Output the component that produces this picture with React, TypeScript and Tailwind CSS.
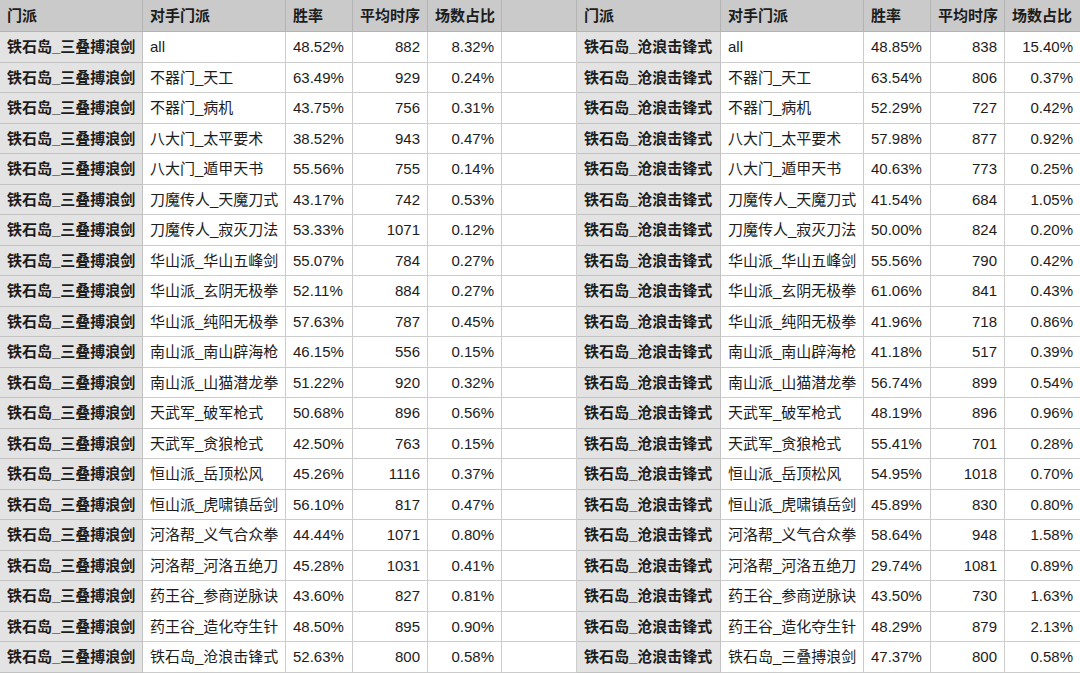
import React from "react";

type Row = [string, string, string, string];

const left: Row[] = [
  ["all", "48.52%", "882", "8.32%"],
  ["不器门_天工", "63.49%", "929", "0.24%"],
  ["不器门_病机", "43.75%", "756", "0.31%"],
  ["八大门_太平要术", "38.52%", "943", "0.47%"],
  ["八大门_遁甲天书", "55.56%", "755", "0.14%"],
  ["刀魔传人_天魔刀式", "43.17%", "742", "0.53%"],
  ["刀魔传人_寂灭刀法", "53.33%", "1071", "0.12%"],
  ["华山派_华山五峰剑", "55.07%", "784", "0.27%"],
  ["华山派_玄阴无极拳", "52.11%", "884", "0.27%"],
  ["华山派_纯阳无极拳", "57.63%", "787", "0.45%"],
  ["南山派_南山辟海枪", "46.15%", "556", "0.15%"],
  ["南山派_山猫潜龙拳", "51.22%", "920", "0.32%"],
  ["天武军_破军枪式", "50.68%", "896", "0.56%"],
  ["天武军_贪狼枪式", "42.50%", "763", "0.15%"],
  ["恒山派_岳顶松风", "45.26%", "1116", "0.37%"],
  ["恒山派_虎啸镇岳剑", "56.10%", "817", "0.47%"],
  ["河洛帮_义气合众拳", "44.44%", "1071", "0.80%"],
  ["河洛帮_河洛五绝刀", "45.28%", "1031", "0.41%"],
  ["药王谷_参商逆脉诀", "43.60%", "827", "0.81%"],
  ["药王谷_造化夺生针", "48.50%", "895", "0.90%"],
  ["铁石岛_沧浪击锋式", "52.63%", "800", "0.58%"],
];

const right: Row[] = [
  ["all", "48.85%", "838", "15.40%"],
  ["不器门_天工", "63.54%", "806", "0.37%"],
  ["不器门_病机", "52.29%", "727", "0.42%"],
  ["八大门_太平要术", "57.98%", "877", "0.92%"],
  ["八大门_遁甲天书", "40.63%", "773", "0.25%"],
  ["刀魔传人_天魔刀式", "41.54%", "684", "1.05%"],
  ["刀魔传人_寂灭刀法", "50.00%", "824", "0.20%"],
  ["华山派_华山五峰剑", "55.56%", "790", "0.42%"],
  ["华山派_玄阴无极拳", "61.06%", "841", "0.43%"],
  ["华山派_纯阳无极拳", "41.96%", "718", "0.86%"],
  ["南山派_南山辟海枪", "41.18%", "517", "0.39%"],
  ["南山派_山猫潜龙拳", "56.74%", "899", "0.54%"],
  ["天武军_破军枪式", "48.19%", "896", "0.96%"],
  ["天武军_贪狼枪式", "55.41%", "701", "0.28%"],
  ["恒山派_岳顶松风", "54.95%", "1018", "0.70%"],
  ["恒山派_虎啸镇岳剑", "45.89%", "830", "0.80%"],
  ["河洛帮_义气合众拳", "58.64%", "948", "1.58%"],
  ["河洛帮_河洛五绝刀", "29.74%", "1081", "0.89%"],
  ["药王谷_参商逆脉诀", "43.50%", "730", "1.63%"],
  ["药王谷_造化夺生针", "48.29%", "879", "2.13%"],
  ["铁石岛_三叠搏浪剑", "47.37%", "800", "0.58%"],
];

const headers = ["门派", "对手门派", "胜率", "平均时序", "场数占比"];

function H({ children }: { children?: React.ReactNode }) {
  return (
    <div className="flex items-center px-[7px] bg-[#cacaca] border-r border-b border-[#b4b4b4] font-bold text-[#1c1c1c] whitespace-nowrap overflow-hidden">
      {children}
    </div>
  );
}

function Name({ children }: { children: React.ReactNode }) {
  return (
    <div className="flex items-center px-[7px] bg-[#e3e3e3] border-r border-b border-[#c2c2c2] font-bold text-[#1c1c1c] whitespace-nowrap overflow-hidden">
      {children}
    </div>
  );
}

function C({ children, right }: { children?: React.ReactNode; right?: boolean }) {
  return (
    <div
      className={
        "flex items-center px-[7px] bg-white border-r border-b border-[#cdcdcd] text-[#1c1c1c] whitespace-nowrap overflow-hidden " +
        (right ? "justify-end" : "justify-start")
      }
    >
      {children}
    </div>
  );
}

export default function App() {
  return (
    <div className="w-[1080px] h-[674px] bg-white overflow-hidden">
      <div
        className="grid grid-cols-[143px_143px_67px_75px_74px_75px_144px_143px_67px_74px_76px] grid-rows-[32px_repeat(21,30.5px)] text-[15px] leading-none"
        style={{ fontFamily: '"Liberation Sans", "Noto Sans CJK SC", sans-serif' }}
      >
        {headers.map((h) => (
          <H key={"l" + h}>{h}</H>
        ))}
        <H />
        {headers.map((h) => (
          <H key={"r" + h}>{h}</H>
        ))}
        {left.map((l, i) => {
          const r = right[i];
          return (
            <React.Fragment key={i}>
              <Name>铁石岛_三叠搏浪剑</Name>
              <C>{l[0]}</C>
              <C>{l[1]}</C>
              <C right>{l[2]}</C>
              <C right>{l[3]}</C>
              <C />
              <Name>铁石岛_沧浪击锋式</Name>
              <C>{r[0]}</C>
              <C>{r[1]}</C>
              <C right>{r[2]}</C>
              <C right>{r[3]}</C>
            </React.Fragment>
          );
        })}
      </div>
    </div>
  );
}
